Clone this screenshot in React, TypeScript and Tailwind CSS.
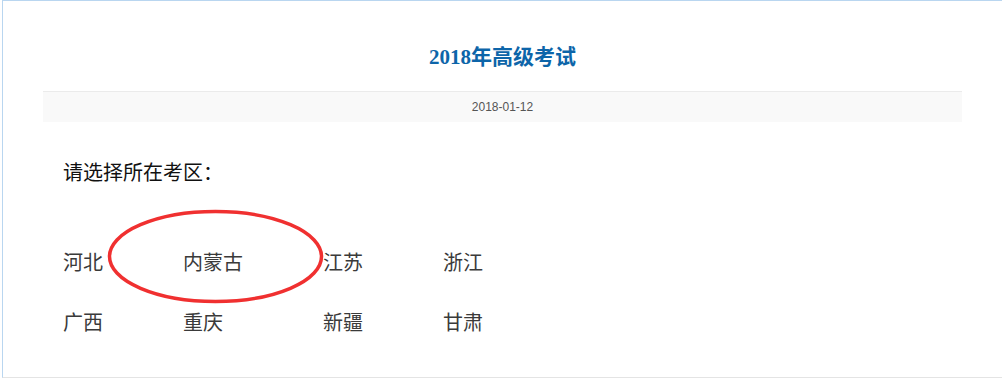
import React from 'react';

const regions = ['河北', '内蒙古', '江苏', '浙江', '广西', '重庆', '新疆', '甘肃'];

export default function App() {
  return (
    <div className="relative w-[1002px] h-[379px] bg-white overflow-hidden">
      <div className="ml-[2px] h-[378px] border-l border-t border-b border-l-[#b9d6f0] border-t-[#b9d6f0] border-b-[#e4e4e4]">
        <h1
          className="pt-[42px] mb-[20px] text-center text-[21px] leading-[28px] font-bold text-[#0d65a9]"
          style={{ fontFamily: '"Liberation Serif", "Noto Sans CJK SC", serif' }}
        >
          2018年高级考试
        </h1>

        <div className="mx-[40px]">
          <div
            className="h-[31px] border-t border-[#ebebeb] bg-[#f9f9f9] flex items-center justify-center text-[12px] text-[#555]"
            style={{ fontFamily: '"Liberation Sans", Arial, sans-serif' }}
          >
            2018-01-12
          </div>

          <div className="px-[20px]" style={{ fontFamily: '"Noto Sans CJK SC", sans-serif' }}>
            <p className="mt-[38px] text-[20px] leading-[24px] text-[#111]">请选择所在考区：</p>

            <div className="mt-[66px] grid grid-cols-[auto_auto_auto_auto] justify-start gap-x-[80px] gap-y-[36px] text-[20px] leading-[24px] text-[#3a3a3a]">
              {regions.map((r) => (
                <span key={r}>{r}</span>
              ))}
            </div>
          </div>
        </div>
      </div>

      <svg className="absolute left-0 top-0 pointer-events-none" width="1002" height="379">
        <ellipse cx="215.5" cy="256.5" rx="106" ry="45" fill="none" stroke="#f03030" strokeWidth="3.5" />
      </svg>
    </div>
  );
}
